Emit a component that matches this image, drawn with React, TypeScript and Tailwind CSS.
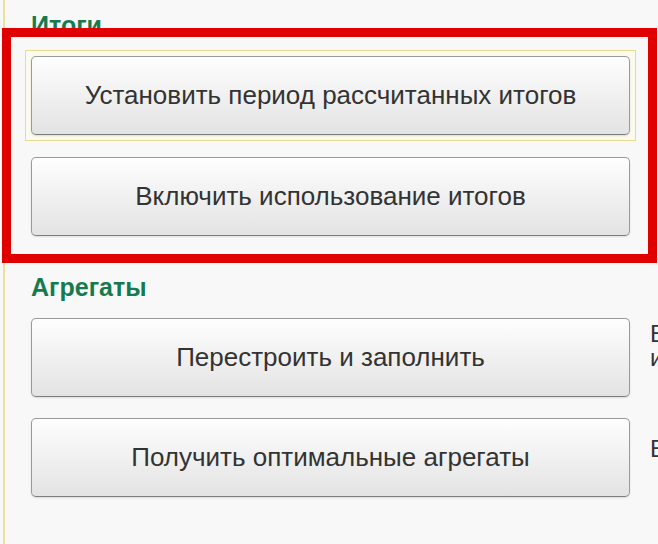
// Totals & aggregates settings panel (1C style) with a red annotation frame around the first group.

const font = { fontFamily: '"Liberation Sans", Arial, sans-serif' }

function ActionButton(props: { label: string }) {
    return (
        <button
            type="button"
            className="w-[599px] h-[79px] shrink-0 rounded-[5px] border border-[#9a9a9a] border-b-[#7d7d7d] bg-gradient-to-b from-[#fefefe] to-[#e3e3e3] text-[26px] text-[#333333] shadow-[0_1px_2px_rgba(0,0,0,0.12)]"
        >
            {props.label}
        </button>
    )
}

export default function App() {
    return (
        <div className="relative w-[658px] h-[544px] overflow-hidden bg-[#f8f8f8] flex" style={font}>
            <div className="w-[3px] shrink-0" />
            <div className="w-[2px] shrink-0 bg-[#ebe39c]" />

            <div className="flex flex-col pl-[20px]">
                <h2 className="mt-[10px] h-[30px] pl-[6px] text-[25px] leading-[30px] font-bold text-[#167a50]">Итоги</h2>

                {/* focused first button gets the yellow frame */}
                <div className="mt-[10px] w-[611px] border border-[#e6dc8c] p-[5px] bg-[#fbfaef]">
                    <ActionButton label="Установить период рассчитанных итогов" />
                </div>
                <div className="mt-[16px] pl-[6px]">
                    <ActionButton label="Включить использование итогов" />
                </div>

                <h2 className="mt-[36px] h-[30px] pl-[6px] text-[25px] leading-[30px] font-bold text-[#167a50]">Агрегаты</h2>

                <div className="mt-[16px] pl-[6px] flex items-start gap-[20px]">
                    <ActionButton label="Перестроить и заполнить" />
                    <p className="shrink-0 pt-[4px] whitespace-nowrap text-[24px] leading-[24px] text-[#333333]">
                        Выполнить перестроение
                        <br />
                        и заполнение агрегатов
                    </p>
                </div>
                <div className="mt-[21px] pl-[6px] flex items-start gap-[20px]">
                    <ActionButton label="Получить оптимальные агрегаты" />
                    <p className="shrink-0 pt-[19px] whitespace-nowrap text-[24px] leading-[24px] text-[#333333]">
                        Вычислить оптимальный состав
                    </p>
                </div>
            </div>

            {/* red annotation frame over the totals group */}
            <div className="absolute left-[2px] top-[28px] w-[655px] h-[235px] border-[9px] border-[#e10000] pointer-events-none" />
        </div>
    )
}
